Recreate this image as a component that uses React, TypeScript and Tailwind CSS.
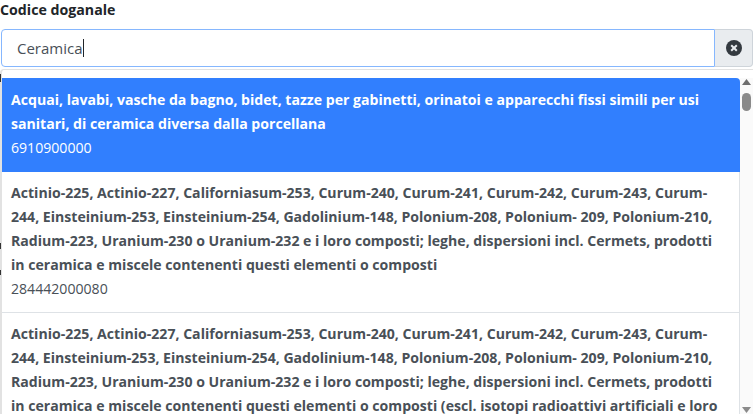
const items = [
  {
    text: "Acquai, lavabi, vasche da bagno, bidet, tazze per gabinetti, orinatoi e apparecchi fissi simili per usi sanitari, di ceramica diversa dalla porcellana",
    code: "6910900000",
    active: true,
  },
  {
    text: "Actinio-225, Actinio-227, Californiasum-253, Curum-240, Curum-241, Curum-242, Curum-243, Curum-244, Einsteinium-253, Einsteinium-254, Gadolinium-148, Polonium-208, Polonium- 209, Polonium-210, Radium-223, Uranium-230 o Uranium-232 e i loro composti; leghe, dispersioni incl. Cermets, prodotti in ceramica e miscele contenenti questi elementi o composti",
    code: "284442000080",
  },
  {
    text: "Actinio-225, Actinio-227, Californiasum-253, Curum-240, Curum-241, Curum-242, Curum-243, Curum-244, Einsteinium-253, Einsteinium-254, Gadolinium-148, Polonium-208, Polonium- 209, Polonium-210, Radium-223, Uranium-230 o Uranium-232 e i loro composti; leghe, dispersioni incl. Cermets, prodotti in ceramica e miscele contenenti questi elementi o composti (escl. isotopi radioattivi artificiali e loro composti)",
    code: "284442000090",
  },
];

export default function App() {
  return (
    <div className="relative h-[414px] w-[753px] overflow-hidden bg-white font-['Open_Sans','Noto_Sans',sans-serif] text-[#212529]">
      <div className="pt-[1px] text-[14.2px] leading-[18px] font-bold">Codice doganale</div>
      <div className="mt-[10px] ml-px flex h-[38px]">
        <div className="flex flex-1 items-center rounded-l-[4px] border border-[#86b7fe] pl-[15px] text-[15px] text-[#495057]">
          Ceramica<span className="h-[18px] w-px bg-[#212529]" />
        </div>
        <div className="flex w-[38px] items-center justify-center rounded-r-[4px] border border-l-0 border-[#ced4da] bg-[#e9ecef]">
          <svg width="16" height="16" viewBox="0 0 16 16">
            <circle cx="8" cy="8" r="8" fill="#343a40" />
            <path d="M5.2 5.2l5.6 5.6M10.8 5.2l-5.6 5.6" stroke="#e9ecef" strokeWidth="2" />
          </svg>
        </div>
      </div>
      <div className="mt-[2px] h-[345px] overflow-hidden rounded-tl-[4px] border-t border-l-2 border-[#e2e2e2] pt-[8px]">
        <div className="flex h-full">
          <div className="flex-1 overflow-hidden rounded-tr-[4px]">
            {items.map((item) => (
              <div
                key={item.code}
                className={
                  item.active
                    ? "bg-[#317ffe] pt-[10px] pr-[12px] pb-[12px] pl-[9px] text-white"
                    : "border-r border-b border-[#dee2e6] pt-[9px] pr-[11px] pb-[11px] pl-[9px] text-[#495057]"
                }
              >
                <div className="text-[14.1px] leading-[24px] font-bold">{item.text}</div>
                <div className="text-[14.1px] leading-[24px]">{item.code}</div>
              </div>
            ))}
          </div>
          <div className="flex h-[336px] w-[13px] flex-col items-center bg-[#fafafa]">
            <svg width="9" height="6" viewBox="0 0 9 6" className="mt-[1px]">
              <path d="M4.5 0L9 6H0z" fill="#6e6e6e" />
            </svg>
            <div className="mt-[8px] h-[18px] w-[9px] rounded-[5px] bg-[#8a8a8a]" />
            <svg width="9" height="6" viewBox="0 0 9 6" className="mt-auto mb-[1px]">
              <path d="M0 0H9L4.5 6z" fill="#8a8a8a" />
            </svg>
          </div>
        </div>
      </div>
      <span className="absolute top-[74px] left-0 h-[8px] w-px bg-[#333]" />
      <span className="absolute top-[243px] left-0 h-[6px] w-px bg-[#333]" />
      <span className="absolute top-[270px] left-0 h-[5px] w-px bg-[#333]" />
    </div>
  );
}
